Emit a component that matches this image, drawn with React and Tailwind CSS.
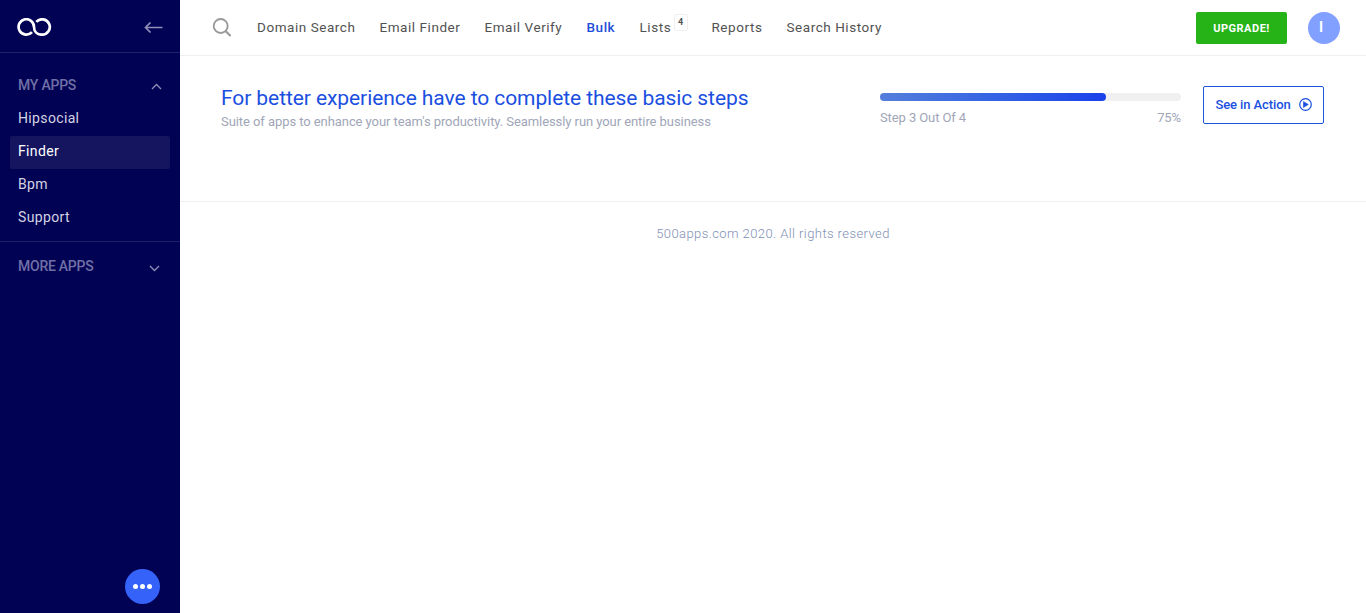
const apps = ["Hipsocial", "Finder", "Bpm", "Support"];

function Logo() {
  return (
    <svg width="35" height="18" viewBox="0 0 35 18" fill="none" stroke="#fff" strokeWidth="2.7">
      <path d="M15 14.100A7.700 7.700 0 1 1 17 9c0 4.600 3.300 7.700 7.900 7.700A7.700 7.700 0 1 0 19.300 3.900" />
    </svg>
  );
}

function Sidebar() {
  return (
    <aside className="flex w-[180px] shrink-0 flex-col bg-[#020255]">
      <div className="flex h-[53px] items-center justify-between border-b border-[#20206a] pl-[17px] pr-[17px] pt-[2px]">
        <Logo />
        <svg className="mt-px" width="19" height="12" viewBox="0 0 19 12" fill="none" stroke="#8f8fb9" strokeWidth="1.700">
          <path d="M18.500 5.500H1.500M6.500 0.500L1.500 5.500l5 5" />
        </svg>
      </div>
      <div className="flex h-[188px] flex-col pt-[17px]">
        <div className="flex h-[32px] items-center justify-between pl-[18px] pr-[18px] text-[14px] font-medium tracking-[-0.23px] text-[#7070a6]">
          <span className="pb-[2px]">MY APPS</span>
          <svg width="11" height="7" viewBox="0 0 11 7" fill="none" stroke="#8f8fb9" strokeWidth="1.300">
            <path d="M1 6l4.500-4.500L10 6" />
          </svg>
        </div>
        <nav className="mt-px flex flex-col px-[10px]">
          {apps.map((a) => (
            <a
              key={a}
              className={
                "flex h-[33px] items-center rounded-[2px] pl-2 pb-[2px] text-[14px] tracking-[0.35px] " +
                (a === "Finder" ? "bg-[#14145f] text-white" : "text-[#d4d4e2]")
              }
            >
              {a}
            </a>
          ))}
        </nav>
      </div>
      <div className="flex h-[50px] items-center justify-between border-t border-[#20206a] pl-[18px] pr-5 text-[14px] font-medium tracking-[-0.25px] text-[#7070a6]">
        <span>MORE APPS</span>
        <svg className="mt-[3px]" width="11" height="7" viewBox="0 0 11 7" fill="none" stroke="#8f8fb9" strokeWidth="1.300">
          <path d="M1 1l4.500 4.500L10 1" />
        </svg>
      </div>
      <button className="mb-[9px] ml-[125px] mt-auto flex size-[35px] items-center justify-center gap-[2.500px] rounded-full bg-[#3563fa]">
        <i className="size-[4.800px] rounded-full bg-white" />
        <i className="size-[4.800px] rounded-full bg-white" />
        <i className="size-[4.800px] rounded-full bg-white" />
      </button>
    </aside>
  );
}

function Header() {
  return (
    <header className="flex h-[56px] items-center border-b border-[#efeff1] pl-[32px] pr-[26px]">
      <svg className="mr-[25px]" width="20" height="20" viewBox="0 0 20 20" fill="none" stroke="#999" strokeWidth="1.800">
        <circle cx="8.700" cy="8" r="7" />
        <path d="M13.500 13L18.600 18" strokeWidth="2.200" />
      </svg>
      <nav className="flex items-center whitespace-nowrap text-[13.500px] tracking-[0.550px] text-[#525252]">
        <a className="w-[122.500px]">Domain Search</a>
        <a className="w-[105px]">Email Finder</a>
        <a className="w-[102px]">Email Verify</a>
        <a className="w-[53px] font-medium text-[#1d4ed8]">Bulk</a>
        <a className="flex w-[72px] items-center">
          Lists
          <span className="-mt-[10px] ml-auto mr-[24px] flex h-[17px] w-[14px] items-center justify-center rounded-[2px] border border-[#f0f0f0] text-[9px] font-bold tracking-normal">
            4
          </span>
        </a>
        <a className="w-[75px]">Reports</a>
        <a>Search History</a>
      </nav>
      <button className="ml-auto h-8 w-[91px] rounded-[2px] bg-[#25b317] pt-[3px] text-[11px] font-bold tracking-[0.5px] text-white">
        UPGRADE!
      </button>
      <span className="ml-[21px] flex size-8 items-center justify-center rounded-full bg-[#82a0ff] pr-[6px] text-[14px] font-bold text-white">
        I
      </span>
    </header>
  );
}

export default function App() {
  return (
    <div className="flex h-[613px] w-[1366px] overflow-hidden bg-white font-['Roboto',sans-serif]">
      <Sidebar />
      <main className="flex flex-1 flex-col">
        <Header />
        <section className="flex h-[146px] items-start border-b border-[#f0f0f2] pl-[41px] pr-[42px] pt-[30px]">
          <div className="whitespace-nowrap">
            <h1 className="text-[21px] leading-6 tracking-[-0.08px] text-[#1a4fe0]">
              For better experience have to complete these basic steps
            </h1>
            <p className="text-[13px] leading-[24px] tracking-[-0.07px] text-[#a0a6b8]">
              Suite of apps to enhance your team's productivity. Seamlessly run your entire business
            </p>
          </div>
          <div className="ml-auto w-[301px] pt-[7px]">
            <div className="h-2 rounded-full bg-[#f0f0f0]">
              <div className="h-2 w-3/4 rounded-full bg-linear-to-r from-[#557edb] to-[#1b40ea]" />
            </div>
            <div className="flex justify-between pt-[7px] text-[13px] leading-[19px] tracking-[-0.1px] text-[#a0a6b8]">
              <span>Step 3 Out Of 4</span>
              <span>75%</span>
            </div>
          </div>
          <button className="ml-[22px] flex h-[38px] w-[121px] items-center justify-center gap-2 whitespace-nowrap rounded-[2px] border border-[#1a55dc] text-[13px] font-medium tracking-[-0.1px] text-[#1a4fe0]">
            See in Action
            <svg className="-mt-px" width="13" height="13" viewBox="0 0 13 13" fill="none" stroke="#1a4fe0" strokeWidth="1.200">
              <circle cx="6.500" cy="6.500" r="5.800" />
              <path d="M4.400 3.500v6l5-3z" fill="#1a4fe0" strokeWidth="0.500" />
            </svg>
          </button>
        </section>
        <footer className="pt-[22px] text-center text-[13px] leading-5 tracking-[0.42px] font-light text-[#8090b5]">
          500apps.com 2020. All rights reserved
        </footer>
      </main>
    </div>
  );
}
